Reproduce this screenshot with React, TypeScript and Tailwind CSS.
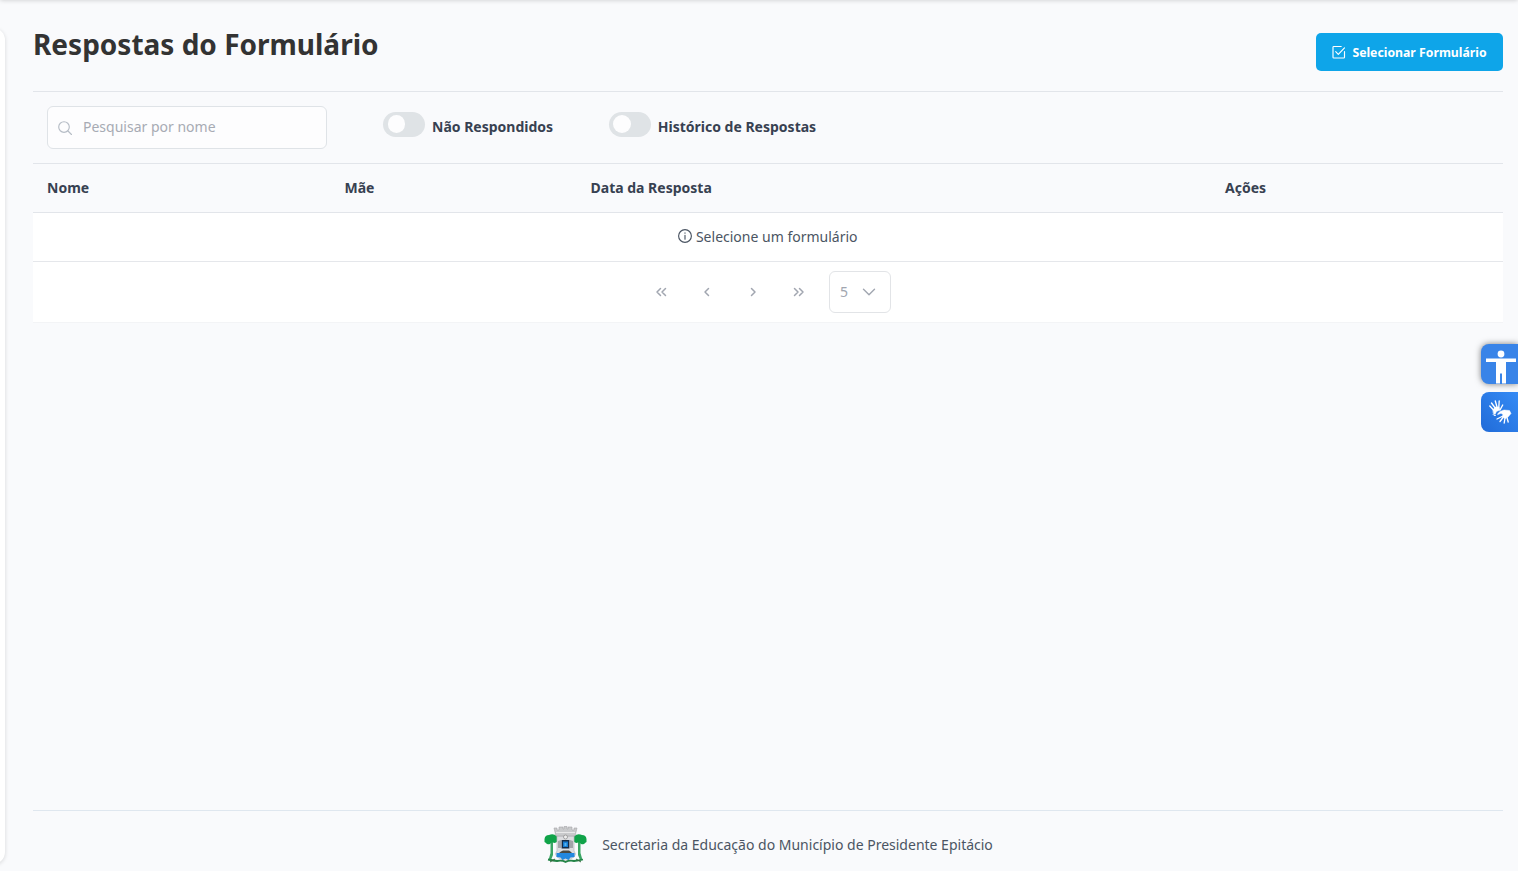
import React from 'react';

const stroke = {
  fill: 'none',
  stroke: 'currentColor',
  strokeWidth: 1.15,
  strokeLinecap: 'round' as const,
  strokeLinejoin: 'round' as const,
};

function SearchIcon() {
  return (
    <svg className="h-[14px] w-[14px] shrink-0" viewBox="0 0 14 14" {...stroke}>
      <circle cx="6" cy="6" r="5.3" />
      <path d="M10 10l3.500 3.500" />
    </svg>
  );
}

function CheckSquareIcon() {
  return (
    <svg className="h-[14px] w-[14px] shrink-0" viewBox="0 0 14 14" {...stroke}>
      <path d="M9.200 1.500H1.800Q1 1.500 1 2.300V12.200Q1 13 1.800 13H11.700Q12.500 13 12.500 12.200V6.500" />
      <path d="M3.700 6.700l2.600 2.700 6.200-6.600" />
    </svg>
  );
}

function InfoIcon() {
  return (
    <svg className="h-[14px] w-[14px] shrink-0" viewBox="0 0 14 14" {...stroke}>
      <circle cx="7" cy="7" r="6.4" />
      <path d="M7 6.300v3.900M7 3.900v.3" />
    </svg>
  );
}

function PageButton({ label, d }: { label: string; d: string }) {
  return (
    <button aria-label={label} className="flex h-[42px] w-[42px] items-center justify-center text-[#a1a6b0]">
      <svg className="h-[14px] w-[14px]" viewBox="0 0 14 14" {...stroke} strokeWidth={1.5}>
        <path d={d} />
      </svg>
    </button>
  );
}

function Toggle({ label, className }: { label: string; className: string }) {
  return (
    <div className={`flex items-center ${className}`}>
      <button role="switch" aria-checked="false" aria-label={label} className="mb-[5px] flex h-[25px] w-[42px] items-center rounded-full bg-[#dfe3e6] pl-[4.500px]">
        <span className="h-[17.500px] w-[17.500px] rounded-full bg-[#fdfdfe]" />
      </button>
      <span className="ml-[7px] font-bold text-[#374151]">{label}</span>
    </div>
  );
}

function Crest() {
  return (
    <svg className="h-[38px] w-[43px] shrink-0" viewBox="0 0 43 38">
      <path d="M6.500 15h2.500l0 14-2 5H4.500l2-7zM36.500 15h-2.500l0 14 2 5h2.500l-2-7z" fill="#3aa564" />
      <path d="M0.500 13Q1 9 5 9Q9 7 13 10L14 14Q13 17 10 17Q8 15 6 18Q3 19 2 17L0.500 16z" fill="#10a349" />
      <path d="M42.500 13Q42 9 38 9Q34 7 30 10L29 14Q30 17 33 17Q35 15 37 18Q40 19 41 17L42.500 16z" fill="#10a349" />
      <path d="M13 10h17v15q3 3 0 6-5 3-8.500 4Q18 34 13 31q-3-3 0-6z" fill="#dcdde0" stroke="#b9babd" strokeWidth=".7" />
      <path d="M10 2h3v2h2V1h4v2h1V0.500h3V3h1V1h4v3h2V2h3l-2 8H12z" fill="#c9cacc" stroke="#a5a5a8" strokeWidth=".6" />
      <path d="M12 6.500h19" stroke="#f1f1f1" strokeWidth=".8" />
      <circle cx="21.500" cy="11" r="2" fill="#eee" stroke="#888" strokeWidth=".7" />
      <path d="M14 15l3-1v8h-3zM29 15l-3-1v8h3z" fill="#a3a5aa" />
      <path d="M18.300 14.800h6.400v7h-6.400z" fill="#167cd3" stroke="#162c46" strokeWidth="1.400" />
      <path d="M20.500 17h2v3h-2z" fill="#55b4f1" />
      <path d="M15 27q2-2 4-2.500h6q2 1 3 2.500z" fill="#4a4a42" />
      <path d="M12.500 27h18v4l-4 .5-2 2.500-3-1.500-3 1.500-2-2.500-4-.5z" fill="#2388df" />
      <path d="M4 33.500q5 1 9 1.500 5-1 8.500 1 4-2 8.500-1 5-.5 9-1.500" fill="none" stroke="#238447" strokeWidth="1.800" />
      <path d="M6 36l5-3M37 36l-5-3" stroke="#37693d" strokeWidth="1" />
    </svg>
  );
}

function SigningHands() {
  return (
    <svg className="h-[26px] w-[24px]" viewBox="0 0 24 26" fill="none" stroke="#fff" strokeLinecap="round" strokeLinejoin="round">
      <path d="M4.500 11L.8 7M5.800 8.500L2.500 4M8 8L6.300 2M9.800 8.500l.4-6.500M11 11l2.700-5" strokeWidth="1.350" />
      <path d="M4 11l2-3 4 0 1 3-3.500 1.500-1.500 3-1.500-1z" fill="#fff" strokeWidth=".5" />
      <path d="M6.500 16.500q-2 .5-2.500-1" strokeWidth="1" />
      <path d="M13 17.500l-5 2.500M14 18.500l-3 4M16 19l-.8 5M18 18.500l1.200 4.500" strokeWidth="1.350" />
      <path d="M8.500 15l2.500-2.500 4-1.500 5.500.5 1.500 3-2.500 3-3 2-3.500-1.500 1-2.500-2-1.200-3 1.200z" fill="#fff" strokeWidth=".5" />
    </svg>
  );
}

export default function App() {
  return (
    <div className="relative flex h-[871px] w-full overflow-hidden bg-[#f9fafc] font-['Noto_Sans',sans-serif] text-[14px] leading-[21px] text-[#4b5563]">
      <div className="absolute inset-x-0 -top-2.5 h-2.5 shadow-[0_0_5px_rgba(0,0,0,0.2)]" />
      <aside className="-ml-[295px] mt-[28px] h-[836px] w-[300px] shrink-0 rounded-[12px] bg-white shadow-[0_1px_4px_rgba(0,0,0,0.14)]" />
      <div className="ml-[28px] mr-[15px] flex min-w-0 flex-1 flex-col">
        <header className="flex h-[91px] shrink-0 items-start justify-between">
          <h1 className="mt-[23px] text-[28px] font-bold leading-[42px] text-[#333333]">Respostas do Formulário</h1>
          <button className="mt-[33px] flex h-[38px] w-[187px] items-center justify-center gap-[6px] rounded-[5px] bg-[#0ea5e9] text-[12.250px] font-bold text-white">
            <CheckSquareIcon />
            Selecionar Formulário
          </button>
        </header>

        <main className="flex-1">
          <div className="flex h-[73px] items-center border-y border-[#e2e5ea] pl-[14px]">
            <label className="flex h-[43px] w-[280px] items-center rounded-[6px] border border-[#dfe3e7] bg-[#fdfdfe] pl-[9.500px] text-[#b6bdc6]">
              <SearchIcon />
              <input className="ml-[11.500px] min-w-0 flex-1 bg-transparent pb-0.5 outline-none placeholder:text-[#a7abb4]" placeholder="Pesquisar por nome" />
            </label>
            <Toggle label="Não Respondidos" className="ml-[56px] pb-0.5" />
            <Toggle label="Histórico de Respostas" className="ml-[55.700px] pb-0.5" />
          </div>
          <div className="grid h-[49px] grid-cols-[297.5px_246px_634.5px_1fr] items-center border-b border-[#e2e5ea] pb-0.5 pl-[14px] font-bold text-[#374151]">
            <span>Nome</span>
            <span>Mãe</span>
            <span>Data da Resposta</span>
            <span>Ações</span>
          </div>
          <div className="flex h-[49px] items-center justify-center gap-[3.500px] border-b border-[#e5e7eb] bg-white pb-0.5">
            <InfoIcon />
            <span>Selecione um formulário</span>
          </div>
          <div className="flex h-[61px] items-center justify-center gap-1 border-b border-[#f3f4f6] bg-white pr-[6px]">
            <PageButton label="Primeira página" d="M6.500 3.500L3 7l3.500 3.500M11.500 3.500L8 7l3.500 3.500" />
            <PageButton label="Página anterior" d="M8.500 3.500L5 7l3.500 3.500" />
            <PageButton label="Próxima página" d="M5.500 3.500L9 7l-3.500 3.500" />
            <PageButton label="Última página" d="M2.500 3.500L6 7l-3.500 3.500M7.500 3.500L11 7l-3.500 3.500" />
            <button className="ml-[5px] flex h-[42px] w-[62px] items-center justify-between rounded-[6px] border border-[#e2e4e7] pl-[10.500px] pr-[14px] text-[#a1a6b0]">
              <span className="pb-0.5">5</span>
              <svg className="h-[14px] w-[14px]" viewBox="0 0 14 14" {...stroke} strokeWidth={1.4}>
                <path d="M1.500 4.300L7 9.700l5.500-5.400" />
              </svg>
            </button>
          </div>
        </main>

        <footer className="flex h-[61px] shrink-0 items-center justify-center gap-[15px] border-t border-[#dfe7ef] pl-px pt-[8px]">
          <Crest />
          <span className="pb-0.5">Secretaria da Educação do Município de Presidente Epitácio</span>
        </footer>
      </div>

      <div className="absolute right-0 top-[344px] flex flex-col gap-2">
        <button aria-label="Acessibilidade" className="flex h-10 w-[37px] items-end overflow-hidden rounded-l-[8px] bg-[#3984e8] pl-[5px] shadow-[0_0_6px_rgba(0,0,0,0.5)]">
          <svg className="h-[34px] w-[30px]" viewBox="0 0 30 34" fill="#fff">
            <circle cx="15" cy="4" r="3.400" />
            <path d="M0 8.500h30v3.500H20v21.500h-4V23.500h-2V33.500h-4V12H0z" />
          </svg>
        </button>
        <button aria-label="Libras" className="flex h-10 w-[37px] items-center rounded-l-[8px] bg-gradient-to-bl from-[#358bf5] to-[#216bd8] pl-[8px]">
          <SigningHands />
        </button>
      </div>
    </div>
  );
}
